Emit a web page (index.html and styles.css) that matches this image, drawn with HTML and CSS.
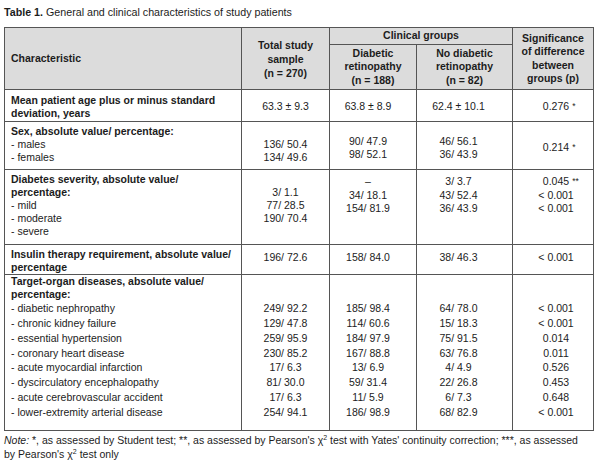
FILE: index.html
```html
<!DOCTYPE html>
<html lang="en">
<head>
<meta charset="utf-8">
<title>Table 1. General and clinical characteristics of study patients</title>
<link rel="stylesheet" href="styles.css">
</head>
<body>
<div class="page">
  <p class="caption"><b>Table 1.</b> General and clinical characteristics of study patients</p>
  <table class="data">
    <colgroup>
      <col class="c1"><col class="c2"><col class="c3"><col class="c4"><col class="c5">
    </colgroup>
    <thead>
      <tr class="h1">
        <th rowspan="2" class="ch">Characteristic</th>
        <th rowspan="2" class="tall">Total study<br>sample<br>(n = 270)</th>
        <th colspan="2">Clinical groups</th>
        <th rowspan="2">Significance<br>of difference<br>between<br>groups (p)</th>
      </tr>
      <tr class="h2">
        <th>Diabetic<br>retinopathy<br>(n = 188)</th>
        <th>No diabetic<br>retinopathy<br>(n = 82)</th>
      </tr>
    </thead>
    <tbody>
      <tr class="r-mean">
        <td class="lab"><span class="hd">Mean patient age plus or minus standard<br>deviation, years</span></td>
        <td class="tot">63.3 ± 9.3</td>
        <td class="dr">63.8 ± 8.9</td>
        <td class="nodr">62.4 ± 10.1</td>
        <td class="p">0.276<span class="mark">*</span></td>
      </tr>
      <tr class="r-sex">
        <td class="lab"><span class="hd">Sex, absolute value/ percentage:</span><span class="item">- males</span><span class="item">- females</span></td>
        <td class="tot">136/ 50.4<br>134/ 49.6</td>
        <td class="dr">90/ 47.9<br>98/ 52.1</td>
        <td class="nodr">46/ 56.1<br>36/ 43.9</td>
        <td class="p">0.214<span class="mark">*</span></td>
      </tr>
      <tr class="r-sev">
        <td class="lab"><span class="hd">Diabetes severity, absolute value/<br>percentage:</span><span class="item">- mild</span><span class="item">- moderate</span><span class="item">- severe</span></td>
        <td class="tot">3/ 1.1<br>77/ 28.5<br>190/ 70.4</td>
        <td class="dr">–<br>34/ 18.1<br>154/ 81.9</td>
        <td class="nodr">3/ 3.7<br>43/ 52.4<br>36/ 43.9</td>
        <td class="p">0.045<span class="mark">**</span><br>&lt; 0.001<br>&lt; 0.001</td>
      </tr>
      <tr class="r-ins">
        <td class="lab"><span class="hd">Insulin therapy requirement, absolute value/<br>percentage</span></td>
        <td class="tot">196/ 72.6</td>
        <td class="dr">158/ 84.0</td>
        <td class="nodr">38/ 46.3</td>
        <td class="p">&lt; 0.001</td>
      </tr>
      <tr class="r-org">
        <td class="lab"><span class="hd">Target-organ diseases, absolute value/<br>percentage:</span><span class="item">- diabetic nephropathy</span><span class="item">- chronic kidney failure</span><span class="item">- essential hypertension</span><span class="item">- coronary heart disease</span><span class="item">- acute myocardial infarction</span><span class="item">- dyscirculatory encephalopathy</span><span class="item">- acute cerebrovascular accident</span><span class="item">- lower-extremity arterial disease</span></td>
        <td class="tot">249/ 92.2<br>129/ 47.8<br>259/ 95.9<br>230/ 85.2<br>17/ 6.3<br>81/ 30.0<br>17/ 6.3<br>254/ 94.1</td>
        <td class="dr">185/ 98.4<br>114/ 60.6<br>184/ 97.9<br>167/ 88.8<br>13/ 6.9<br>59/ 31.4<br>11/ 5.9<br>186/ 98.9</td>
        <td class="nodr">64/ 78.0<br>15/ 18.3<br>75/ 91.5<br>63/ 76.8<br>4/ 4.9<br>22/ 26.8<br>6/ 7.3<br>68/ 82.9</td>
        <td class="p">&lt; 0.001<br>&lt; 0.001<br>0.014<br>0.011<br>0.526<br>0.453<br>0.648<br>&lt; 0.001</td>
      </tr>
    </tbody>
  </table>
  <p class="note"><i>Note:</i> *, as assessed by Student test; **, as assessed by Pearson's χ<sup>2</sup> test with Yates' continuity correction; ***, as assessed<br>by Pearson's χ<sup>2</sup> test only</p>
</div>
</body>
</html>
```

FILE: styles.css
```css
* {
  box-sizing: border-box;
}

body {
  margin: 0;
  background: #ffffff;
  color: #1c1c1c;
  font-family: "Liberation Sans", Arial, sans-serif;
  font-size: 10.5px;
}

.page {
  padding: 5px 0 0 4px;
}

.caption {
  margin: 0;
  font-size: 10.7px;
  line-height: 14px;
}

.data {
  margin-top: 8px;
  width: 590px;
  table-layout: fixed;
  border-collapse: separate;
  border-spacing: 0;
  border-top: 1px solid #555555;
  border-left: 1px solid #555555;
}

.c1 { width: 237px; }
.c2 { width: 88px; }
.c3 { width: 87px; }
.c4 { width: 96px; }
.c5 { width: 81px; }

.data th,
.data td {
  border-right: 1px solid #555555;
  border-bottom: 1px solid #555555;
  padding: 0;
  line-height: 13px;
}

.data th {
  background: #dcdcdc;
  font-weight: bold;
  text-align: center;
  vertical-align: middle;
  line-height: 13.4px;
}

.data th.ch {
  text-align: left;
  padding-left: 6px;
}

.data th.tall {
  line-height: 14px;
}

.h1 { height: 17px; }
.h2 { height: 45px; }

.data td {
  vertical-align: top;
  text-align: center;
}

.data td.lab {
  text-align: left;
  padding-left: 6px;
}

.hd {
  display: block;
  font-weight: bold;
}

.item {
  display: block;
}

.data td.dr { padding-right: 10px; }
.data td.nodr { padding-right: 12px; }
.data td.p { padding-left: 6px; }

.mark {
  display: inline-block;
  width: 0;
  white-space: nowrap;
  text-indent: 3px;
  font-size: 8.5px;
  vertical-align: 1px;
}

/* Row: mean age */
.r-mean { height: 32px; }
.r-mean td { padding-top: 10px; }
.r-mean td.lab { padding-top: 4px; }

/* Row: sex */
.r-sex { height: 48px; }
.r-sex td.lab { padding-top: 3px; }
.r-sex td.tot { padding-top: 16px; }
.r-sex td.dr,
.r-sex td.nodr { padding-top: 13px; }
.r-sex td.p { padding-top: 19px; }

/* Row: diabetes severity */
.r-sev { height: 75px; }
.r-sev td.lab { padding-top: 3px; }
.r-sev td.tot { padding-top: 16px; }
.r-sev td.dr,
.r-sev td.nodr,
.r-sev td.p {
  padding-top: 5px;
  line-height: 13.5px;
}

/* Row: insulin */
.r-ins { height: 29px; }
.r-ins td { padding-top: 6px; }
.r-ins td.lab { padding-top: 3px; }

/* Row: target-organ diseases */
.r-org { height: 156px; }
.r-org td {
  padding-top: 26px;
  line-height: 14.86px;
}
.r-org td.lab {
  padding-top: 0;
  line-height: 13px;
}
.r-org .item {
  line-height: 14.86px;
}

.note {
  margin: 2px 0 0;
  line-height: 14px;
}

.note sup {
  font-size: 7px;
  line-height: 0;
  vertical-align: 4px;
}
```
